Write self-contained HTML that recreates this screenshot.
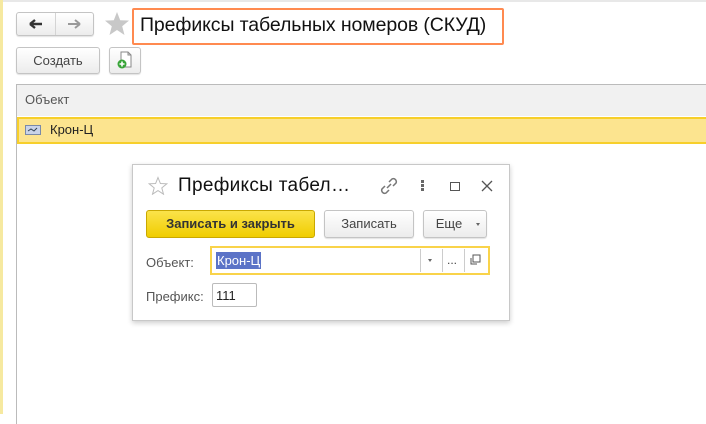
<!DOCTYPE html>
<html><head><meta charset="utf-8"><style>
*{box-sizing:border-box;margin:0;padding:0}
body{width:706px;height:414px;background:#fff;font-family:"Liberation Sans",Arial,sans-serif;position:relative;overflow:hidden;color:#333}
.a{position:absolute}
.btn{position:absolute;border:1px solid #c4c4c4;border-radius:3px;background:linear-gradient(#fff,#ececec);box-shadow:0 1px 1px rgba(0,0,0,.12);font-size:13px;color:#444;text-align:center}
</style></head><body>
<div class="a" style="left:0;top:0;width:3px;height:414px;background:#f6e9a0"></div>
<div class="a" style="left:3px;top:0;width:703px;height:2px;background:#e8e8e8"></div>

<div class="btn" style="left:16px;top:12px;width:78px;height:24px"></div>
<div class="a" style="left:55px;top:13px;width:1px;height:22px;background:#d4d4d4"></div>
<svg class="a" style="left:28px;top:17px" width="16" height="14"><path d="M2 7H14M2 7L7 3M2 7L7 11" stroke="#333" stroke-width="2.4" fill="none"/></svg>
<svg class="a" style="left:66px;top:17px" width="16" height="14"><path d="M2 7H14M14 7L9 3M14 7L9 11" stroke="#999" stroke-width="2" fill="none"/></svg>
<svg class="a" style="left:104px;top:11px" width="26" height="25"><path d="M13 1L16.2 9.2 25 9.6 18.2 15.2 20.5 24 13 19 5.5 24 7.8 15.2 1 9.6 9.8 9.2Z" fill="#c8c8c8"/></svg>
<div class="a" style="left:132px;top:8px;width:372px;height:37px;border:2.5px solid #ff8a50;border-radius:2px"></div>
<div class="a" style="left:140px;top:13px;font-size:19.5px;letter-spacing:-0.1px;color:#111;line-height:24px">Префиксы табельных номеров (СКУД)</div>

<div class="btn" style="left:16px;top:47px;width:84px;height:27px;line-height:25px">Создать</div>
<div class="btn" style="left:109px;top:47px;width:32px;height:27px"></div>
<svg class="a" style="left:115px;top:50px" width="20" height="20"><path d="M6 2H13L16 5V17H6Z" fill="#fff" stroke="#888"/><path d="M13 2V5H16" fill="none" stroke="#888"/><circle cx="7" cy="14" r="4.5" fill="#3aa53a"/><path d="M7 11.5V16.5M4.5 14H9.5" stroke="#fff" stroke-width="1.6"/></svg>

<div class="a" style="left:16px;top:84px;width:700px;height:340px;border-left:1px solid #bbb;border-top:1px solid #bbb"></div>
<div class="a" style="left:17px;top:85px;width:689px;height:31px;background:#f1f1f1"></div>
<div class="a" style="left:25px;top:92px;font-size:13px;color:#555">Объект</div>
<div class="a" style="left:17px;top:117px;width:700px;height:27px;background:#fce48f;border:2px solid #f7cf2a"></div>
<svg class="a" style="left:25px;top:125px" width="16" height="10"><rect x="0.5" y="0.5" width="15" height="9" fill="#c9d3e8" stroke="#7a8aa8"/><path d="M3 6L6 4 9 6 12 3" stroke="#345" fill="none"/></svg>
<div class="a" style="left:50px;top:122px;font-size:13px;color:#222">Крон-Ц</div>

<div class="a" style="left:132px;top:164px;width:378px;height:157px;background:#fff;border:1px solid #c8c8c8;box-shadow:0 2px 5px rgba(0,0,0,.2)"></div>
<svg class="a" style="left:148px;top:176px" width="20" height="19"><path d="M10 1.5L12.4 7.5 18.8 7.8 13.8 11.9 15.5 18.2 10 14.6 4.5 18.2 6.2 11.9 1.2 7.8 7.6 7.5Z" fill="none" stroke="#bbb"/></svg>
<div class="a" style="left:178px;top:175px;font-size:19px;letter-spacing:0.3px;color:#111">Префиксы табел…</div>
<svg class="a" style="left:378px;top:175px" width="22" height="22"><path d="M9 13L13 9M7 11L4 14A3 3 0 0 0 8 18L11 15M11 7L14 4A3 3 0 0 1 18 8L15 11" stroke="#777" stroke-width="1.5" fill="none"/></svg>
<div class="a" style="left:421px;top:180px;width:3px;height:3px;background:#666;box-shadow:0 4px 0 #666,0 8px 0 #666"></div>
<div class="a" style="left:450px;top:182px;width:10px;height:9px;border:1.3px solid #555"></div>
<svg class="a" style="left:481px;top:180px" width="12" height="12"><path d="M1 1L11 11M11 1L1 11" stroke="#555" stroke-width="1.3"/></svg>

<div class="a" style="left:146px;top:210px;width:169px;height:28px;border:1px solid #c9a800;border-radius:3px;background:linear-gradient(#fbe34a,#f0cd00);font-size:13px;font-weight:bold;color:#333;text-align:center;line-height:26px">Записать и закрыть</div>
<div class="btn" style="left:324px;top:210px;width:90px;height:28px;line-height:26px">Записать</div>
<div class="btn" style="left:423px;top:210px;width:64px;height:28px;line-height:26px;padding-right:12px">Еще</div>
<div class="a" style="left:476px;top:223px;border:2.5px solid transparent;border-top:3px solid #666"></div>

<div class="a" style="left:146px;top:255px;font-size:13px;color:#555">Объект:</div>
<div class="a" style="left:210px;top:246px;width:280px;height:29px;border:2px solid #f9d34a;background:#fff"></div>
<div class="a" style="left:216px;top:252px;height:17px;background:#5b73c7;color:#fff;font-size:13px;padding:1px 1px;line-height:15px">Крон-Ц</div>
<div class="a" style="left:420px;top:249px;width:1px;height:23px;background:#ccc"></div>
<div class="a" style="left:442px;top:249px;width:1px;height:23px;background:#ccc"></div>
<div class="a" style="left:464px;top:249px;width:1px;height:23px;background:#ccc"></div>
<div class="a" style="left:428px;top:259px;border:2.5px solid transparent;border-top:3px solid #666"></div>
<div class="a" style="left:447px;top:253px;font-size:12px;color:#444">...</div>
<svg class="a" style="left:469px;top:254px" width="12" height="12"><rect x="4" y="1" width="7" height="7" fill="none" stroke="#555"/><path d="M2 4V10H8" fill="none" stroke="#555"/></svg>

<div class="a" style="left:146px;top:289px;font-size:13px;color:#555">Префикс:</div>
<div class="a" style="left:212px;top:283px;width:45px;height:24px;border:1px solid #bbb;border-radius:2px;font-size:13px;color:#222;padding:4px 3px">111</div>
</body></html>
